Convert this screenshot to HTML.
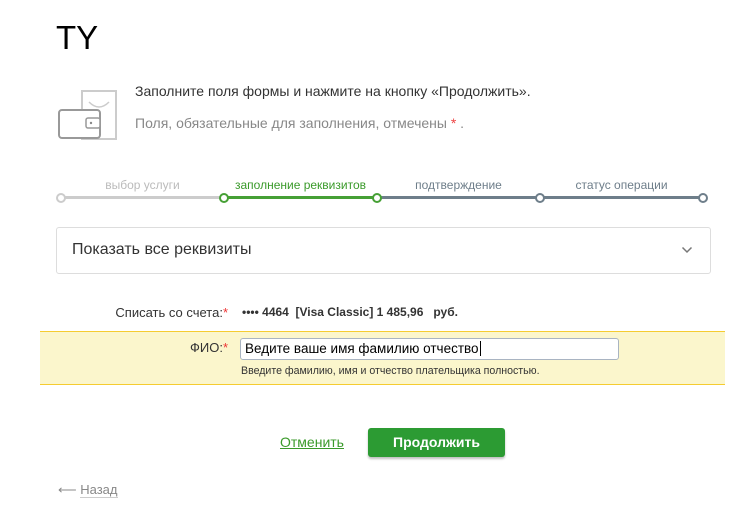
<!DOCTYPE html>
<html><head><meta charset="utf-8"><style>
*{margin:0;padding:0;box-sizing:border-box}
body{width:735px;height:529px;background:#fff;font-family:"Liberation Sans",Arial,sans-serif;position:relative;overflow:hidden;color:#333}
.a{position:absolute;white-space:nowrap}
</style></head><body>
<div class="a" style="left:56px;top:18px;font-size:33px;color:#000;line-height:40px">TY</div>

<svg class="a" style="left:55px;top:88px" width="64" height="54" viewBox="0 0 64 54">
<rect x="27" y="3" width="34" height="48" fill="#fff" stroke="#ccc" stroke-width="2"/>
<path d="M34 14 Q44 24 54 14" fill="none" stroke="#ccc" stroke-width="1.5"/>
<rect x="4" y="22" width="41" height="28" rx="3" fill="#fff" stroke="#999" stroke-width="2"/>
<rect x="31" y="30" width="14" height="10" rx="2" fill="#fff" stroke="#999" stroke-width="1.5"/>
<circle cx="36" cy="35" r="1.2" fill="#888"/>
</svg>

<div class="a" style="left:135px;top:83px;font-size:14px;color:#333;line-height:16px">Заполните поля формы и нажмите на кнопку «Продолжить».</div>
<div class="a" style="left:135px;top:115px;font-size:14px;color:#888;line-height:16px">Поля, обязательные для заполнения, отмечены <span style="color:#e44">*</span> .</div>

<div class="a" style="left:61px;top:196px;width:163px;height:3px;background:#ccc"></div>
<div class="a" style="left:224px;top:196px;width:153px;height:3px;background:#46a035"></div>
<div class="a" style="left:377px;top:196px;width:326px;height:3px;background:#6e7e8a"></div>
<div class="a" style="left:56px;top:193px;width:10px;height:10px;border-radius:50%;border:2px solid #ccc;background:#fff"></div>
<div class="a" style="left:219px;top:193px;width:10px;height:10px;border-radius:50%;border:2px solid #46a035;background:#fff"></div>
<div class="a" style="left:372px;top:193px;width:10px;height:10px;border-radius:50%;border:2px solid #46a035;background:#fff"></div>
<div class="a" style="left:535px;top:193px;width:10px;height:10px;border-radius:50%;border:2px solid #6e7e8a;background:#fff"></div>
<div class="a" style="left:698px;top:193px;width:10px;height:10px;border-radius:50%;border:2px solid #6e7e8a;background:#fff"></div>
<div class="a" style="left:61px;width:163px;top:178px;text-align:center;font-size:12px;color:#bbb">выбор услуги</div>
<div class="a" style="left:224px;width:153px;top:178px;text-align:center;font-size:12px;color:#3a9a2a">заполнение реквизитов</div>
<div class="a" style="left:377px;width:163px;top:178px;text-align:center;font-size:12px;color:#6e7e8a">подтверждение</div>
<div class="a" style="left:540px;width:163px;top:178px;text-align:center;font-size:12px;color:#6e7e8a">статус операции</div>

<div class="a" style="left:56px;top:227px;width:655px;height:47px;border:1px solid #ddd;border-radius:3px"></div>
<div class="a" style="left:72px;top:240px;font-size:16px;color:#333;line-height:20px">Показать все реквизиты</div>
<svg class="a" style="left:681px;top:246px" width="12" height="8" viewBox="0 0 12 8"><path d="M1.5 1.5 L6 6 L10.5 1.5" fill="none" stroke="#777" stroke-width="1.5"/></svg>

<div class="a" style="left:0;width:228px;top:305px;text-align:right;font-size:13px;color:#333">Списать со счета:<span style="color:#e33">*</span></div>
<div class="a" style="left:242px;top:305px;font-size:12px;font-weight:bold;color:#333">•••• 4464&nbsp; [Visa Classic] 1 485,96&nbsp;&nbsp; руб.</div>

<div class="a" style="left:40px;top:331px;width:685px;height:54px;background:#fbf6cc;border-top:1px solid #f5cc30;border-bottom:1px solid #f5cc30"></div>
<div class="a" style="left:0;width:228px;top:340px;text-align:right;font-size:13px;color:#333">ФИО:<span style="color:#e33">*</span></div>
<div class="a" style="left:240px;top:338px;width:379px;height:22px;background:#fff;border:1px solid #a9b4c2;border-radius:3px;padding-left:4px;font-size:13.5px;line-height:20px;color:#000">Ведите ваше имя фамилию отчество<span style="border-left:1px solid #000;margin-left:1px"></span></div>
<div class="a" style="left:241px;top:365px;font-size:10.6px;color:#333">Введите фамилию, имя и отчество плательщика полностью.</div>

<div class="a" style="left:280px;top:434px;font-size:14px;color:#3a9a2a;text-decoration:underline">Отменить</div>
<div class="a" style="left:368px;top:428px;width:137px;height:29px;background:#2c9b33;border-radius:3px;box-shadow:0 2px 2px rgba(0,0,0,0.25);color:#fff;font-weight:bold;font-size:14px;text-align:center;line-height:29px">Продолжить</div>

<div class="a" style="left:58px;top:482px;font-size:13px;color:#888">⟵ <span style="border-bottom:1px solid #ccc">Назад</span></div>
</body></html>
